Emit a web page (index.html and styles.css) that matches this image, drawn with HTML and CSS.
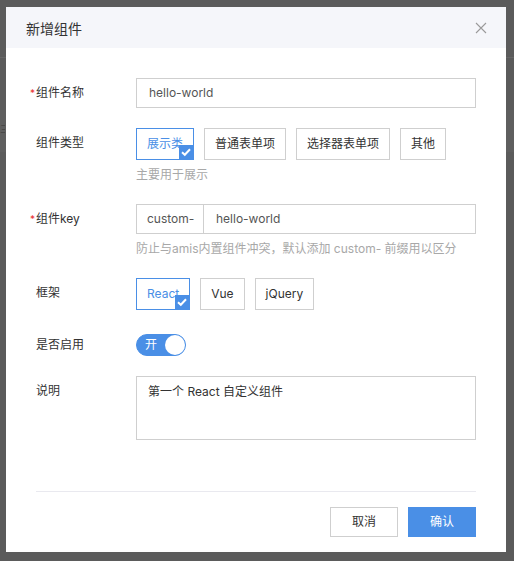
FILE: index.html
```html
<!DOCTYPE html>
<html lang="zh">
<head>
<meta charset="utf-8">
<link rel="stylesheet" href="styles.css">
</head>
<body>
<div class="page-line"></div>
<div class="page-band"><span class="page-glyph">三</span></div>
<div class="modal">
  <div class="modal-header">
    <span class="modal-title">新增组件</span>
    <svg class="close" width="12" height="12" viewBox="0 0 12 12"><path d="M1 1L11 11M11 1L1 11" stroke="#9a9a9a" stroke-width="1.1" fill="none"/></svg>
  </div>
  <div class="modal-body">
    <div class="form-item">
      <label class="label"><span class="req">*</span>组件名称</label>
      <div class="control"><div class="input">hello-world</div></div>
    </div>
    <div class="form-item">
      <label class="label">组件类型</label>
      <div class="control">
        <div class="btn-group">
          <span class="opt active">展示类<i class="tick"><svg width="14" height="14" viewBox="0 0 14 14"><path d="M3 7.3L5.8 9.8L11 4.3" stroke="#fff" stroke-width="2" fill="none"/></svg></i></span>
          <span class="opt">普通表单项</span>
          <span class="opt">选择器表单项</span>
          <span class="opt">其他</span>
        </div>
        <div class="help">主要用于展示</div>
      </div>
    </div>
    <div class="form-item">
      <label class="label"><span class="req">*</span>组件key</label>
      <div class="control">
        <div class="input-group"><span class="addon">custom-</span><span class="ig-input">hello-world</span></div>
        <div class="help">防止与amis内置组件冲突，默认添加 custom- 前缀用以区分</div>
      </div>
    </div>
    <div class="form-item">
      <label class="label">框架</label>
      <div class="control">
        <div class="btn-group">
          <span class="opt opt-sm active">React<i class="tick"><svg width="14" height="14" viewBox="0 0 14 14"><path d="M3 7.3L5.8 9.8L11 4.3" stroke="#fff" stroke-width="2" fill="none"/></svg></i></span>
          <span class="opt opt-sm">Vue</span>
          <span class="opt opt-sm">jQuery</span>
        </div>
      </div>
    </div>
    <div class="form-item switch-item">
      <label class="label">是否启用</label>
      <div class="control"><span class="switch"><span class="switch-text">开</span><span class="knob"></span></span></div>
    </div>
    <div class="form-item">
      <label class="label">说明</label>
      <div class="control"><div class="textarea">第一个 React 自定义组件</div></div>
    </div>
  </div>
  <div class="modal-footer">
    <span class="btn">取消</span>
    <span class="btn btn-primary">确认</span>
  </div>
</div>
</body>
</html>
```
FILE: styles.css
```css
* { box-sizing: border-box; }
html, body { margin: 0; padding: 0; }
body {
  width: 514px;
  height: 561px;
  background: #5b5b5b;
  font-family: Inter, "Noto Sans CJK SC", sans-serif;
  font-size: 12px;
  color: #333;
  overflow: hidden;
  position: relative;
  padding: 7px 8px 9px 6px;
}
.page-line {
  position: absolute;
  left: 0; right: 0; top: 57px;
  height: 1px;
  background: #666;
}
.page-band {
  position: absolute;
  left: 0; right: 0; top: 110px;
  height: 42px;
  background: #5f5f5f;
}
.page-glyph {
  position: absolute;
  left: 0; top: 12px;
  width: 5px;
  overflow: hidden;
  color: #444;
  font-size: 10px;
  line-height: 14px;
}
.modal {
  position: relative;
  width: 500px;
  height: 545px;
  background: #fff;
  display: flex;
  flex-direction: column;
}
.modal-header {
  height: 41px;
  background: #f5f6fa;
  display: flex;
  align-items: center;
  justify-content: space-between;
  padding: 0 20px;
}
.modal-title { font-size: 14px; color: #333; }
.close { margin-right: -1px; }
.modal-body {
  padding: 30px 30px 0 30px;
  flex: 1;
}
.form-item {
  display: flex;
  margin-bottom: 20px;
}
.label {
  width: 100px;
  flex: none;
  line-height: 30px;
  color: #333;
  position: relative;
}
.req {
  position: absolute;
  left: -6px;
  top: 0;
  color: #ea2e2e;
  font-size: 10px;
}
.control { flex: 1; }
.input {
  height: 30px;
  border: 1px solid #cfcfcf;
  padding: 0 12px;
  line-height: 28px;
  color: #555;
}
.btn-group { display: flex; gap: 10px; }
.opt {
  position: relative;
  height: 32px;
  border: 1px solid #cfcfcf;
  padding: 0 10px;
  line-height: 30px;
  color: #333;
  text-align: center;
  overflow: hidden;
}
.opt.active { border-color: #4a8fe6; color: #4a8fe6; }
.tick {
  position: absolute;
  right: 0; bottom: 0;
  width: 14px; height: 14px;
  background: #4a8fe6;
  display: flex;
}
.help {
  margin-top: 6px;
  line-height: 18px;
  color: #a8a8a8;
}
.input-group {
  display: flex;
  height: 30px;
  border: 1px solid #cfcfcf;
  line-height: 28px;
  color: #555;
}
.addon {
  width: 67px;
  border-right: 1px solid #cfcfcf;
  padding-left: 10px;
  flex: none;
}
.ig-input { padding-left: 12px; }
.switch-item .control { padding-top: 4px; }
.switch-item { margin-bottom: 20px; height: 26px; }
.switch {
  display: flex;
  align-items: center;
  justify-content: space-between;
  width: 50px;
  height: 22px;
  border-radius: 11px;
  background: #4a8fe6;
  border: 1px solid #4a8fe6;
  padding-left: 8px;
}
.switch-text { color: #fff; font-size: 12px; line-height: 20px; }
.knob {
  width: 20px; height: 20px;
  border-radius: 50%;
  background: #fff;
}
.textarea {
  height: 64px;
  border: 1px solid #cfcfcf;
  padding: 6px 11px;
  line-height: 18px;
  color: #333;
}
.modal-footer {
  margin: 0 30px;
  border-top: 1px solid #e9e9ef;
  padding: 15px 0 15px;
  display: flex;
  justify-content: flex-end;
  gap: 10px;
}
.btn {
  width: 68px;
  height: 30px;
  border: 1px solid #cfcfcf;
  text-align: center;
  line-height: 28px;
  color: #333;
}
.btn-primary {
  background: #4a8fe6;
  border-color: #4a8fe6;
  color: #fff;
}
```
